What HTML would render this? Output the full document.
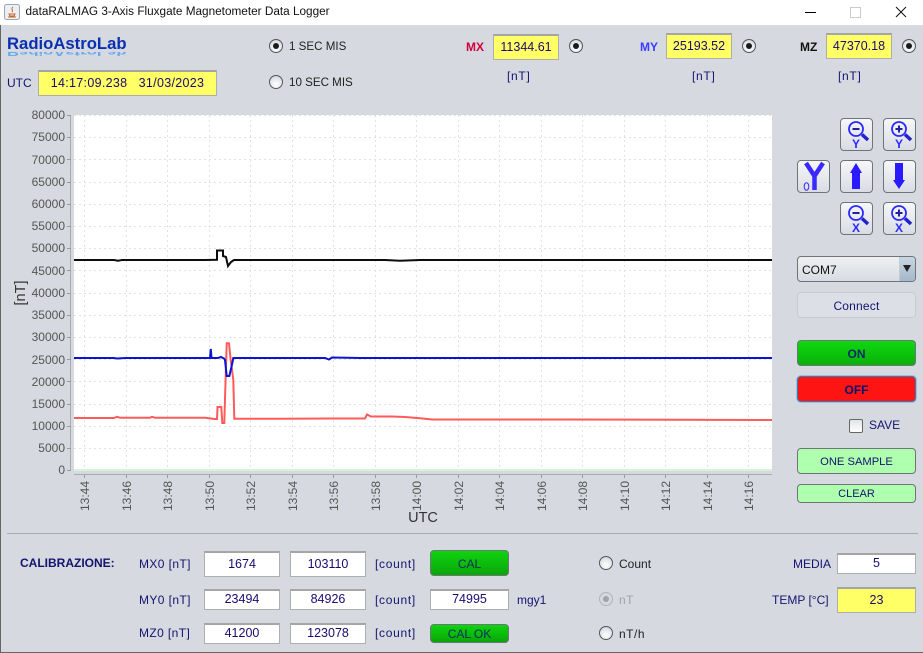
<!DOCTYPE html>
<html><head><meta charset="utf-8"><style>
html,body{margin:0;padding:0}
body{width:923px;height:653px;overflow:hidden;background:#d6d9e0;position:relative;font:12px "Liberation Sans",sans-serif;color:#14146e}
.a{position:absolute;white-space:nowrap}
.t{line-height:16px;height:16px}
.f{position:absolute;box-sizing:border-box;background:#fff;border:1px solid #aeaeae;border-top:2px solid #a5a5a5;text-align:center;color:#1a0a6e;font-size:12.5px;display:flex;align-items:center;justify-content:center;padding-bottom:2px}
.y{background:#ffff66}
.b{position:absolute;box-sizing:border-box;border-radius:4px;border:1px solid #6f7478;text-align:center;display:flex;align-items:center;justify-content:center;color:#14146e;padding-top:2px}
.g{background:linear-gradient(#0fd40f,#0aa50a);color:#0b2d5e}
.lg{background:#aeffae}
.r{position:absolute;box-sizing:border-box;width:14px;height:14px;border-radius:50%;border:1px solid #53575c;background:radial-gradient(circle at 50% 70%,#fff,#dfe3e8 65%,#c0c5cc)}
.r.on::after{content:"";position:absolute;left:3px;top:3px;width:6px;height:6px;border-radius:50%;background:#1a1a1a}
.ib{position:absolute;box-sizing:border-box;width:33px;height:33px;border-radius:4px;border:1px solid #6f7478;background:linear-gradient(#f6f7f8,#d9dce2)}
.ib svg{position:absolute;left:0;top:0}
.ib text{font:bold 12px "Liberation Sans",sans-serif;fill:#2a2aff;stroke:none}
.c{letter-spacing:.7px}
</style></head><body>
<div class="a" style="left:0;top:0;width:923px;height:25px;background:#fff"></div>
<div class="a" style="left:0;top:25px;width:1px;height:628px;background:#666"></div>
<div class="a" style="left:1px;top:652px;width:922px;height:1px;background:#666"></div>
<svg class="a" style="left:4px;top:4px" width="16" height="16"><rect x=".5" y=".5" width="15" height="15" rx="2" fill="#eceff3" stroke="#9aa"/><path d="M9 3c-3 2 1 3-1 5M5 10h6l-1 2H6zM4 13h8" stroke="#c86428" fill="none"/></svg>
<div class="a" style="left:25.5px;top:4px;font-size:11.77px;line-height:16px;color:#111">dataRALMAG 3-Axis Fluxgate Magnetometer Data Logger</div>
<div class="a" style="left:805px;top:12px;width:11px;height:1px;background:#000"></div>
<div class="a" style="left:850px;top:7px;width:9px;height:9px;border:1px solid #ccc"></div>
<svg class="a" style="left:895px;top:6px" width="12" height="12"><path d="M1 1l10 10M11 1L1 11" stroke="#111" fill="none"/></svg>

<div class="a" style="left:7px;top:44px;font:bold 16.7px/16px 'Liberation Sans',sans-serif;color:#5aa8f0;transform:scaleY(-.55);transform-origin:0 8px;height:8px;overflow:hidden;opacity:.9">RadioAstroLab</div>
<div class="a" style="left:7px;top:36px;font:bold 16.7px/16px 'Liberation Sans',sans-serif;color:#0a30b0">RadioAstroLab</div>
<div class="a t" style="left:7px;top:75px">UTC</div>
<div class="f y" style="left:38px;top:70px;width:179px;height:26px;letter-spacing:.3px">14:17:09.238&nbsp;&nbsp; 31/03/2023</div>
<div class="r on" style="left:269px;top:39px"></div><div class="a t" style="left:289px;top:39px;color:#222;font-size:11.6px">1 SEC MIS</div>
<div class="r" style="left:269px;top:75px"></div><div class="a t" style="left:289px;top:75px;color:#222;font-size:11.6px">10 SEC MIS</div>

<div class="a t" style="left:466px;top:39px;font-weight:bold;color:#d0003c">MX</div>
<div class="f y" style="left:493px;top:34px;width:66px;height:26px">11344.61</div>
<div class="r on" style="left:569px;top:39px"></div>
<div class="a t c" style="left:507px;top:68px">[nT]</div>
<div class="a t" style="left:640px;top:39px;font-weight:bold;color:#3c3cff">MY</div>
<div class="f y" style="left:666px;top:33px;width:66px;height:26px">25193.52</div>
<div class="r on" style="left:742px;top:39px"></div>
<div class="a t c" style="left:692px;top:68px">[nT]</div>
<div class="a t" style="left:800px;top:39px;font-weight:bold;color:#111">MZ</div>
<div class="f y" style="left:826px;top:33px;width:66px;height:26px">47370.18</div>
<div class="r on" style="left:902px;top:39px"></div>
<div class="a t c" style="left:838px;top:68px">[nT]</div>

<svg class="a" style="left:0;top:100px" width="790" height="430" font-family="Liberation Sans,sans-serif" font-size="12" fill="#555">
<g transform="translate(0,-100)">
<rect x="74" y="115" width="698" height="355" fill="#fff"/>
<g stroke="#e2e2e2" stroke-dasharray="2 3" fill="none">
<path d="M74 115.500H772M74 137.500H772M74 159.500H772M74 182.500H772M74 204.500H772M74 226.500H772M74 248.500H772M74 270.500H772M74 293.500H772M74 315.500H772M74 337.500H772M74 359.500H772M74 381.500H772M74 404.500H772M74 426.500H772M74 448.500H772"/>
<path d="M84.500 115V470M126.500 115V470M167.500 115V470M209.500 115V470M250.500 115V470M292.500 115V470M333.500 115V470M375.500 115V470M416.500 115V470M458.500 115V470M499.500 115V470M541.500 115V470M582.500 115V470M624.500 115V470M665.500 115V470M707.500 115V470M748.500 115V470"/>
</g>
<rect x="74" y="469" width="698" height="2" fill="#d8f4d8"/>
<path d="M70.500 115V470.500M74 474.500H772" stroke="#a9abb0" fill="none"/>
<path d="M67 115.500h4M67 137.500h4M67 159.500h4M67 182.500h4M67 204.500h4M67 226.500h4M67 248.500h4M67 270.500h4M67 293.500h4M67 315.500h4M67 337.500h4M67 359.500h4M67 381.500h4M67 404.500h4M67 426.500h4M67 448.500h4M67 470.500h4M84.500 475v3M126.500 475v3M167.500 475v3M209.500 475v3M250.500 475v3M292.500 475v3M333.500 475v3M375.500 475v3M416.500 475v3M458.500 475v3M499.500 475v3M541.500 475v3M582.500 475v3M624.500 475v3M665.500 475v3M707.500 475v3M748.500 475v3" stroke="#999" fill="none"/>
<g text-anchor="end">
<text x="65" y="119">80000</text><text x="65" y="141">75000</text><text x="65" y="164">70000</text><text x="65" y="186">65000</text><text x="65" y="208">60000</text><text x="65" y="230">55000</text><text x="65" y="252">50000</text><text x="65" y="275">45000</text><text x="65" y="297">40000</text><text x="65" y="319">35000</text><text x="65" y="341">30000</text><text x="65" y="364">25000</text><text x="65" y="386">20000</text><text x="65" y="408">15000</text><text x="65" y="430">10000</text><text x="65" y="452">5000</text><text x="65" y="474">0</text>
</g>
<g text-anchor="end">
<text transform="translate(89,481) rotate(-90)">13:44</text><text transform="translate(131,481) rotate(-90)">13:46</text><text transform="translate(172,481) rotate(-90)">13:48</text><text transform="translate(214,481) rotate(-90)">13:50</text><text transform="translate(255,481) rotate(-90)">13:52</text><text transform="translate(297,481) rotate(-90)">13:54</text><text transform="translate(338,481) rotate(-90)">13:56</text><text transform="translate(380,481) rotate(-90)">13:58</text><text transform="translate(421,481) rotate(-90)">14:00</text><text transform="translate(463,481) rotate(-90)">14:02</text><text transform="translate(504,481) rotate(-90)">14:04</text><text transform="translate(546,481) rotate(-90)">14:06</text><text transform="translate(587,481) rotate(-90)">14:08</text><text transform="translate(629,481) rotate(-90)">14:10</text><text transform="translate(670,481) rotate(-90)">14:12</text><text transform="translate(712,481) rotate(-90)">14:14</text><text transform="translate(753,481) rotate(-90)">14:16</text>
</g>
<text x="423" y="522" text-anchor="middle" font-size="14.500" fill="#333">UTC</text>
<text transform="translate(25,293) rotate(-90)" text-anchor="middle" font-size="14.500" fill="#333">[nT]</text>
<path d="M74 418H114L117 416.800L120 417.700L150 417.800L152 416.800L155 417.700H205L211 418.500L214 419H217L217.500 407H221.300L222.300 423H224.300L225 399L226.700 343.300H229L230.700 360L233.300 380L234.300 418.700H278L330 418.500L365 418.500L367 414.500L371 416.500H392L405 417L420 418.300L432 419.500H560L772 420" fill="none" stroke="#ff5a5a" stroke-width="2"/>
<path d="M74 358H114L117 358.500L125 358H210L210.800 349L211.500 358H218L221 357L224 358.500L225 360L226.700 376H229.300L231.700 366L233.300 358H325L329 359.500L332 357.500L360 358L772 358" fill="none" stroke="#0a14d2" stroke-width="2"/>
<path d="M74 260H114L118 260.700L122 260H205L217 259.800V250.500H223V256L226 257L228 266L231 262L234 260H385L400 260.700L420 260H560L772 260" fill="none" stroke="#0c0c0c" stroke-width="2"/>
</g></svg>

<div class="ib" style="left:840px;top:118px"><svg width="31" height="31" fill="none" stroke="#2a2aff"><circle cx="15" cy="10" r="7" stroke-width="1.800"/><path d="M11.500 10h7" stroke-width="2" stroke="#2020a0"/><path d="M21 15.500l6 5.500" stroke-width="3.500" stroke="#2222cc"/><text x="15" y="29" text-anchor="middle">Y</text></svg></div>
<div class="ib" style="left:883px;top:118px"><svg width="31" height="31" fill="none" stroke="#2a2aff"><circle cx="15" cy="10" r="7" stroke-width="1.800"/><path d="M11.500 10h7M15 6.500v7" stroke-width="2" stroke="#2020a0"/><path d="M21 15.500l6 5.500" stroke-width="3.500" stroke="#2222cc"/><text x="15" y="29" text-anchor="middle">Y</text></svg></div>
<div class="ib" style="left:797px;top:160px"><svg width="31" height="31" fill="none" stroke="#3a2aff"><path d="M8 2l8.500 13L25 2M16.500 14v15" stroke-width="4.500"/><ellipse cx="8.500" cy="25.500" rx="2.300" ry="3.800" stroke-width="1"/></svg></div>
<div class="ib" style="left:840px;top:160px"><svg width="31" height="31"><path d="M15 2l6 10h-2v16h-8V12H9z" fill="#2a1aff"/></svg></div>
<div class="ib" style="left:883px;top:160px"><svg width="31" height="31"><path d="M15 28l6-9h-2V2h-8v17H9z" fill="#2a1aff"/></svg></div>
<div class="ib" style="left:840px;top:202px"><svg width="31" height="31" fill="none" stroke="#2a2aff"><circle cx="15" cy="10" r="7" stroke-width="1.800"/><path d="M11.500 10h7" stroke-width="2" stroke="#2020a0"/><path d="M21 15.500l6 5.500" stroke-width="3.500" stroke="#2222cc"/><text x="15" y="29" text-anchor="middle">X</text></svg></div>
<div class="ib" style="left:883px;top:202px"><svg width="31" height="31" fill="none" stroke="#2a2aff"><circle cx="15" cy="10" r="7" stroke-width="1.800"/><path d="M11.500 10h7M15 6.500v7" stroke-width="2" stroke="#2020a0"/><path d="M21 15.500l6 5.500" stroke-width="3.500" stroke="#2222cc"/><text x="15" y="29" text-anchor="middle">X</text></svg></div>

<div class="b" style="left:797px;top:256px;width:119px;height:26px;justify-content:flex-start;padding-left:4px;background:linear-gradient(#eef0f3,#d8dbe1);color:#111">COM7
<div style="position:absolute;right:0;top:0;width:16px;height:24px;background:linear-gradient(#c8d6e4,#a4b8cc);border-radius:0 3px 3px 0;border-left:1px solid #c6ccd4;box-sizing:border-box"><div style="margin:8px 0 0 3px;width:0;height:0;border:4px solid transparent;border-top:7px solid #222;border-bottom:0"></div></div></div>
<div class="b" style="left:797px;top:292px;width:119px;height:26px;background:#dcdfe5;border-color:#c8ccd2;letter-spacing:.2px">Connect</div>
<div class="b g" style="left:797px;top:340px;width:119px;height:26px;font-weight:bold;background:linear-gradient(#10d810,#0ab00a);color:#0a2a6a">ON</div>
<div class="b" style="left:797px;top:376px;width:119px;height:26px;font-weight:bold;background:#ff1414;color:#0a1470;border:1px solid #3c78b4;box-shadow:0 0 0 1px #9cc0e0">OFF</div>
<div class="a" style="left:849px;top:419px;width:14px;height:14px;box-sizing:border-box;border:1px solid #666;border-radius:2px;background:linear-gradient(#e0e3e8,#fff)"></div>
<div class="a t" style="left:869px;top:417px">SAVE</div>
<div class="b lg" style="left:797px;top:448px;width:119px;height:26px;font-size:11.2px">ONE SAMPLE</div>
<div class="b lg" style="left:797px;top:484px;width:119px;height:19px;font-size:11px;padding-top:0">CLEAR</div>

<div class="a" style="left:7px;top:533px;width:911px;height:1px;background:#a8aaae"></div>
<div class="a t" style="left:20px;top:555px;font-weight:bold">CALIBRAZIONE:</div>
<div class="a t c" style="left:139px;top:556px;letter-spacing:.4px">MX0 [nT]</div>
<div class="f" style="left:204px;top:551px;width:76px;height:26px">1674</div>
<div class="f" style="left:290px;top:551px;width:76px;height:26px">103110</div>
<div class="a t c" style="left:375px;top:556px">[count]</div>
<div class="b g" style="left:430px;top:550px;width:79px;height:26px;font-weight:normal">CAL</div>
<div class="a t c" style="left:139px;top:592px;letter-spacing:.4px">MY0 [nT]</div>
<div class="f" style="left:204px;top:589px;width:76px;height:21px">23494</div>
<div class="f" style="left:290px;top:589px;width:76px;height:21px">84926</div>
<div class="a t c" style="left:375px;top:592px">[count]</div>
<div class="f" style="left:430px;top:589px;width:79px;height:21px">74995</div>
<div class="a t" style="left:517px;top:592px">mgy1</div>
<div class="a t c" style="left:139px;top:625px;letter-spacing:.4px">MZ0 [nT]</div>
<div class="f" style="left:204px;top:623px;width:76px;height:21px">41200</div>
<div class="f" style="left:290px;top:623px;width:76px;height:21px">123078</div>
<div class="a t c" style="left:375px;top:625px">[count]</div>
<div class="b g" style="left:430px;top:624px;width:79px;height:19px;font-weight:normal;padding-top:0">CAL OK</div>

<div class="r" style="left:599px;top:556px"></div><div class="a t" style="left:619px;top:556px;color:#222">Count</div>
<div class="r" style="left:599px;top:592px;border-color:#b0b3b8;background:#d6d9e0"><div style="position:absolute;left:3px;top:3px;width:6px;height:6px;border-radius:50%;background:#a0a3a8"></div></div><div class="a t" style="left:619px;top:592px;color:#a0a3a8;letter-spacing:.5px">nT</div>
<div class="r" style="left:599px;top:626px"></div><div class="a t" style="left:619px;top:626px;color:#222;letter-spacing:.5px">nT/h</div>
<div class="a t" style="left:793px;top:556px">MEDIA</div>
<div class="f" style="left:837px;top:553px;width:79px;height:21px">5</div>
<div class="a t" style="left:772px;top:592px">TEMP [°C]</div>
<div class="f y" style="left:837px;top:587px;width:79px;height:26px">23</div>
</body></html>
